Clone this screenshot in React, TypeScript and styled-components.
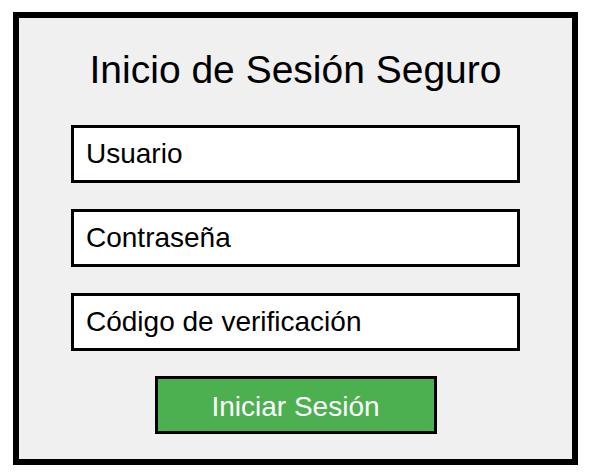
import React from "react";
import styled, { createGlobalStyle } from "styled-components";

const Global = createGlobalStyle`
  html, body { margin: 0; padding: 0; background: #ffffff; }
  body { font-family: "Liberation Sans", Arial, sans-serif; }
`;

const Page = styled.div`
  padding: 12px 0 0 13px;
`;

const Panel = styled.div`
  box-sizing: border-box;
  width: 565px;
  border: 6px solid #000;
  background: #f0f0f0;
  padding: 30px 0 25px;
  display: flex;
  flex-direction: column;
  align-items: center;
`;

const Title = styled.h1`
  margin: 0 0 33px;
  font-size: 39px;
  line-height: 44px;
  font-weight: normal;
  color: #000;
`;

const Fields = styled.div`
  display: flex;
  flex-direction: column;
  gap: 26px;
`;

const Field = styled.div`
  box-sizing: border-box;
  width: 449px;
  height: 58px;
  border: 3px solid #000;
  background: #fff;
  padding-left: 12px;
  display: flex;
  align-items: center;
  font-size: 28px;
  color: #000;
`;

const Button = styled.button`
  box-sizing: border-box;
  margin-top: 25px;
  width: 282px;
  height: 58px;
  border: 3px solid #000;
  background: #4caf50;
  color: #fff;
  font-family: "Liberation Sans", Arial, sans-serif;
  font-size: 28px;
  padding: 3px 0 0;
  cursor: pointer;
`;

export default function App() {
  return (
    <Page>
      <Global />
      <Panel>
        <Title>Inicio de Sesión Seguro</Title>
        <Fields>
          <Field>Usuario</Field>
          <Field>Contraseña</Field>
          <Field>Código de verificación</Field>
        </Fields>
        <Button>Iniciar Sesión</Button>
      </Panel>
    </Page>
  );
}
